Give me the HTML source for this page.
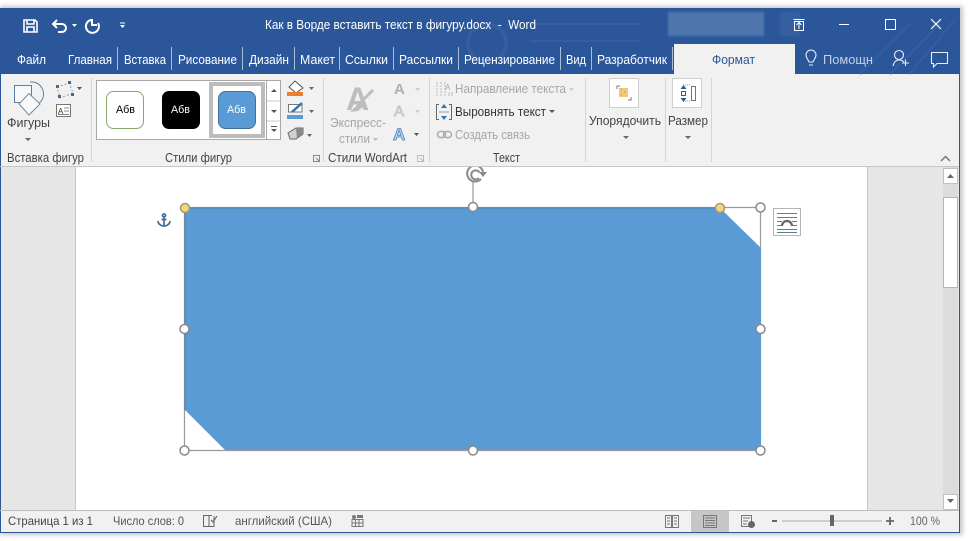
<!DOCTYPE html>
<html><head><meta charset="utf-8"><style>
html,body{margin:0;padding:0;background:#fff;width:968px;height:541px;overflow:hidden}
svg{display:block;position:absolute;left:0;top:0}
text{font-family:"Liberation Sans",sans-serif;font-size:13px;fill:#444}
.t{fill:#fff}
.g{fill:#a6a6a6}
</style></head><body>
<svg width="968" height="541" viewBox="0 0 968 541" xmlns="http://www.w3.org/2000/svg">
<defs>
<filter id="s" x="-2%" y="-2%" width="104%" height="104%"><feGaussianBlur stdDeviation="2"/></filter>
<filter id="b" x="-10%" y="-10%" width="120%" height="120%"><feGaussianBlur stdDeviation="1"/></filter>
<clipPath id="c"><rect x="440" y="167" width="70" height="40"/></clipPath>
</defs>
<rect x="0" y="6" width="963" height="529" fill="#888" opacity=".45" filter="url(#s)"/>
<rect x="0" y="8" width="960" height="525" fill="#2b579a"/>
<rect x="1" y="74" width="958" height="92" fill="#f1f1f1"/>
<rect x="1" y="166" width="958" height="344" fill="#e6e6e6"/>
<rect x="1" y="510" width="958" height="22" fill="#f1f1f1"/>
<rect x="0" y="166" width="959" height="1" fill="#c6c6c6"/>
<rect x="0" y="510" width="959" height="1" fill="#bdbdbd"/>

<!-- title bar decoration -->
<g fill="none" stroke="#335f9f" stroke-width="2">
<circle cx="487" cy="43" r="19" stroke-width="4"/>
<path d="M530 24H640M530 41H640M860 74l50-50M890 74l50-50M910 74l45-55"/>
</g>
<rect x="668" y="12" width="96" height="24" fill="#4f76ad" filter="url(#b)"/>
<rect x="780" y="12" width="20" height="24" fill="#34609f" filter="url(#b)"/>

<!-- QAT -->
<g stroke="#fff" fill="none" stroke-width="1.600">
<path d="M24 20H35L37 22V32H24Z"/><path d="M27 20V24H34V20M27 32V27H34V32"/>
<path d="M54 24H62A4 4 0 0 1 62 32H58" stroke-width="2"/><path d="M57 20L53 24L57 28" stroke-width="2"/>
<path d="M91 20A6.500 6.500 0 1 0 98 23" stroke-width="2"/><path d="M92 19V25H97" stroke-width="2"/>
<path d="M120 23H125" stroke-width="1"/>
</g>
<path d="M72 24h5l-2.500 3zM120 25h5l-2.500 3z" fill="#fff"/>
<text class="t" x="265" y="29" textLength="271" lengthAdjust="spacingAndGlyphs" xml:space="preserve">Как в Ворде вставить текст в фигуру.docx  -  Word</text>

<!-- window controls -->
<g fill="none" stroke="#fff" stroke-width="1">
<path d="M793.500 19.500H804.500M794.500 21.500H803.500V30.500H794.500ZM799 29V23M796.500 25L799 22.500L801.500 25"/>
<path d="M839 24.500H849"/>
<rect x="885.500" y="19.500" width="10" height="10"/>
<path d="M931 19L941 29M941 19L931 29" stroke-width="1.200"/>
</g>

<!-- tabs -->
<rect x="674" y="44" width="121" height="30" fill="#f1f1f1"/>
<g fill="#a9bcd8">
<rect x="117" y="47" width="1" height="23"/><rect x="171" y="47" width="1" height="23"/><rect x="242" y="47" width="1" height="23"/><rect x="294" y="47" width="1" height="23"/><rect x="339" y="47" width="1" height="23"/><rect x="393" y="47" width="1" height="23"/><rect x="458" y="47" width="1" height="23"/><rect x="560" y="47" width="1" height="23"/><rect x="591" y="47" width="1" height="23"/><rect x="672" y="47" width="1" height="23"/>
</g>
<text class="t" x="17" y="64" textLength="29" lengthAdjust="spacingAndGlyphs">Файл</text>
<text class="t" x="68" y="64" textLength="44" lengthAdjust="spacingAndGlyphs">Главная</text>
<text class="t" x="124" y="64" textLength="42" lengthAdjust="spacingAndGlyphs">Вставка</text>
<text class="t" x="178" y="64" textLength="59" lengthAdjust="spacingAndGlyphs">Рисование</text>
<text class="t" x="249" y="64" textLength="40" lengthAdjust="spacingAndGlyphs">Дизайн</text>
<text class="t" x="300" y="64" textLength="35" lengthAdjust="spacingAndGlyphs">Макет</text>
<text class="t" x="345" y="64" textLength="43" lengthAdjust="spacingAndGlyphs">Ссылки</text>
<text class="t" x="399" y="64" textLength="54" lengthAdjust="spacingAndGlyphs">Рассылки</text>
<text class="t" x="464" y="64" textLength="91" lengthAdjust="spacingAndGlyphs">Рецензирование</text>
<text class="t" x="566" y="64" textLength="20" lengthAdjust="spacingAndGlyphs">Вид</text>
<text class="t" x="597" y="64" textLength="70" lengthAdjust="spacingAndGlyphs">Разработчик</text>
<text x="712" y="64" textLength="43" lengthAdjust="spacingAndGlyphs" style="fill:#2b579a">Формат</text>
<text x="823" y="64" textLength="50" lengthAdjust="spacingAndGlyphs" style="fill:#c3d0e4">Помощн</text>
<g fill="none" stroke="#e6ecf5" stroke-width="1.100">
<path d="M809 62C808 59 806 58 806 55A5 5 0 0 1 816 55C816 58 814 59 813 62ZM809 65H813"/>
<circle cx="899" cy="55" r="4.500"/><path d="M893 66C894 62 896 60 899 60C901 60 903 61 904 62M902 63H909M905.500 59.500V66"/>
<path d="M931.500 52.500H947.500V63.500H937L933.500 67V63.500H931.500Z"/>
</g>

<!-- ribbon separators -->
<g fill="#d4d4d4">
<rect x="91" y="78" width="1" height="84"/><rect x="323" y="78" width="1" height="84"/><rect x="429" y="78" width="1" height="84"/><rect x="585" y="78" width="1" height="84"/><rect x="665" y="78" width="1" height="84"/><rect x="711" y="78" width="1" height="84"/>
</g>

<!-- Вставка фигур -->
<g fill="none" stroke="#5f7f9f" stroke-width="1">
<path d="M30 82A12 12 0 0 1 38 104"/>
<rect x="14.500" y="85.500" width="17" height="17" fill="#f6f8fa"/>
<path d="M29 93.500L40 104L29 115L19 104Z" fill="#f6f8fa" stroke="#7a8a99"/>
</g>
<path d="M57 87L69 83L73 93L60 98Z" fill="none" stroke="#8aa0b5" stroke-dasharray="2 2"/>
<g fill="#4a6a8a"><rect x="56" y="85" width="3" height="3"/><rect x="68" y="81" width="3" height="3"/><rect x="71" y="93" width="3" height="3"/><rect x="58" y="95" width="3" height="3"/></g>
<path d="M77 87h5l-2.500 3z" fill="#555"/>
<rect x="56.500" y="104.500" width="14" height="12" fill="#fff" stroke="#777"/>
<text x="58" y="114" style="font-size:8px;fill:#333">A</text><path d="M64 108H69M64 111H69M58 114.500H69" stroke="#888" fill="none"/>
<text x="7" y="127" textLength="43" lengthAdjust="spacingAndGlyphs">Фигуры</text>
<path d="M25 138h6l-3 3z" fill="#666"/>
<text x="7" y="162" textLength="77" lengthAdjust="spacingAndGlyphs">Вставка фигур</text>

<!-- gallery -->
<rect x="96.500" y="80.500" width="170" height="59" fill="#fff" stroke="#a8a8a8"/>
<rect x="209" y="82" width="56" height="56" fill="#bcbcbc"/><rect x="213" y="86" width="48" height="48" fill="#fff"/>
<rect x="106.500" y="91.500" width="37" height="37" rx="7" fill="#fff" stroke="#8aa56b"/>
<rect x="162" y="91" width="38" height="38" rx="7" fill="#000"/>
<rect x="218.500" y="91.500" width="37" height="37" rx="7" fill="#5b9bd5" stroke="#41719c"/>
<text x="116" y="113" textLength="19" lengthAdjust="spacingAndGlyphs" style="font-size:11px;fill:#000">Абв</text>
<text x="171" y="113" textLength="19" lengthAdjust="spacingAndGlyphs" style="font-size:11px;fill:#fff">Абв</text>
<text x="227" y="113" textLength="19" lengthAdjust="spacingAndGlyphs" style="font-size:11px;fill:#fff">Абв</text>
<rect x="266.500" y="80.500" width="14" height="59" fill="#fff" stroke="#a8a8a8"/>
<path d="M267 101H280M267 121H280" stroke="#c8c8c8"/>
<path d="M271 92l3-3 3 3zM271 110h6l-3 3zM271 129h6l-3 3z" fill="#555"/><path d="M271 126.500h6" stroke="#555"/>

<!-- colour tools -->
<path d="M295 81L303 88L296 93L289 87Z" fill="#fff" stroke="#555"/>
<rect x="287" y="92" width="16" height="4" fill="#ed7d31"/>
<path d="M288.500 104.500H302V112H288.500Z" fill="#fff" stroke="#777"/><path d="M292 112L302 103" stroke="#2e75b6" stroke-width="2.500"/>
<rect x="287" y="115" width="16" height="4" fill="#5b9bd5"/>
<path d="M288 133L296 128H303V134L296 139H290Z" fill="#d0d0d0" stroke="#666"/><path d="M296 128L303 128V134L297 138Z" fill="#888"/>
<path d="M309 87h5l-2.500 3zM309 110h5l-2.500 3zM307 134h5l-2.500 3z" fill="#666"/>
<text x="165" y="162" textLength="67" lengthAdjust="spacingAndGlyphs">Стили фигур</text>
<path d="M313.500 155.500h6v6h-6zM316 158l3 3" fill="none" stroke="#888"/>

<!-- WordArt -->
<text x="346" y="110" style="font-size:32px;font-weight:bold;fill:#bdbdbd">A</text>
<path d="M373 90L362 101" stroke="#bdbdbd" stroke-width="3" fill="none"/>
<path d="M350 112L360 102L364 106L358 111Z" fill="#bdbdbd"/>
<text class="g" x="330" y="127" textLength="56" lengthAdjust="spacingAndGlyphs">Экспресс-</text>
<text class="g" x="339" y="143" textLength="31" lengthAdjust="spacingAndGlyphs">стили</text>
<path d="M373 138h5l-2.500 3z" fill="#bbb"/>
<text x="394" y="94" style="font-size:15px;font-weight:bold;fill:#b0b0b0">A</text>
<path d="M415 88h5l-2.500 3z" fill="#ccc"/>
<text x="394" y="116" style="font-size:15px;fill:none;stroke:#b5b5b5;stroke-width:.7">A</text>
<path d="M415 110h5l-2.500 3z" fill="#ccc"/>
<text x="393" y="140" style="font-size:17px;font-weight:bold;fill:#bcd4ee;stroke:#4a80bd;stroke-width:.8">A</text>
<path d="M414 133h5l-2.500 3z" fill="#555"/>
<text x="328" y="162" textLength="79" lengthAdjust="spacingAndGlyphs">Стили WordArt</text>
<path d="M417.500 155.500h6v6h-6zM420 158l3 3" fill="none" stroke="#bbb"/>

<!-- Текст -->
<path d="M437 82V96M441 82V96M445 82V96" stroke="#bbb" fill="none" stroke-dasharray="2 1"/>
<text x="445" y="90" style="font-size:8px;fill:#aaa">A</text><path d="M449 92V96M452 92V96" stroke="#bbb"/>
<text class="g" x="455" y="93" textLength="111" lengthAdjust="spacingAndGlyphs">Направление текста</text>
<path d="M569 88h5l-2.500 3z" fill="#ccc"/>
<path d="M439 104.500H436.500V119.500H439M449 104.500H451.500V119.500H449" fill="none" stroke="#666"/>
<path d="M439 112H449" stroke="#999"/><path d="M444 104l3 4h-6zM444 120l3-4h-6z" fill="#2e75b6"/>
<text x="455" y="116" textLength="91" lengthAdjust="spacingAndGlyphs" style="fill:#333">Выровнять текст</text>
<path d="M549 110h6l-3 3z" fill="#555"/>
<rect x="437.500" y="131.500" width="8" height="6" rx="3" fill="none" stroke="#aaa" stroke-width="1.500"/><rect x="443.500" y="131.500" width="8" height="6" rx="3" fill="none" stroke="#aaa" stroke-width="1.500"/>
<text class="g" x="455" y="139" textLength="75" lengthAdjust="spacingAndGlyphs">Создать связь</text>
<text x="493" y="162" textLength="27" lengthAdjust="spacingAndGlyphs">Текст</text>

<!-- Упорядочить / Размер -->
<rect x="609.500" y="78.500" width="29" height="29" fill="#fff" stroke="#cfcfcf"/>
<rect x="619" y="88" width="9" height="9" fill="#f2c879"/>
<path d="M621 89h1M624 92h1M621 95h1" stroke="#b08a30"/>
<path d="M617 89V86H620M631 97V100H628" fill="none" stroke="#777"/>
<text x="589" y="125" textLength="72" lengthAdjust="spacingAndGlyphs">Упорядочить</text>
<path d="M623 136h6l-3 3z" fill="#666"/>
<rect x="672.500" y="78.500" width="29" height="29" fill="#fff" stroke="#cfcfcf"/>
<rect x="691.500" y="86.500" width="4" height="14" fill="#fff" stroke="#777"/>
<path d="M683 85h7M683 101h7" stroke="#999" stroke-dasharray="1 1"/>
<path d="M683.500 85l-3 4h6zM683.500 102l-3-4h6z" fill="#2f5f80"/>
<rect x="681.500" y="91.500" width="4" height="4" fill="none" stroke="#2f5f80"/>
<text x="668" y="125" textLength="40" lengthAdjust="spacingAndGlyphs">Размер</text>
<path d="M685 136h6l-3 3z" fill="#666"/>
<path d="M941 161L945.500 156.500L950 161" fill="none" stroke="#777" stroke-width="1.500"/>

<!-- document -->
<rect x="76" y="167" width="791" height="343" fill="#fff"/>
<rect x="75" y="167" width="1" height="343" fill="#c6c6c6"/>
<rect x="867" y="167" width="1" height="343" fill="#c6c6c6"/>

<!-- scrollbar -->
<rect x="943" y="167" width="15" height="343" fill="#dcdcdc"/>
<rect x="943.500" y="168.500" width="14" height="15" fill="#fff" stroke="#c0c0c0"/>
<path d="M947 178l3.500-4 3.500 4z" fill="#666"/>
<rect x="943.500" y="197.500" width="14" height="90" fill="#fff" stroke="#b5b5b5"/>
<rect x="943.500" y="494.500" width="14" height="15" fill="#fff" stroke="#c0c0c0"/>
<path d="M947 499h7l-3.500 4z" fill="#666"/>

<!-- shape -->
<path d="M184.500 207.500H760.500V450.500H184.500Z" fill="none" stroke="#9a9a9a" stroke-width="1.200"/>
<path d="M473 182V207" stroke="#9a9a9a" stroke-width="1.200"/>
<path d="M185 208H720L761 248V450H225L185 410Z" fill="#5b9bd5"/>
<path d="M185 410V208H720" fill="none" stroke="#4f7fa8" stroke-width="1"/>
<g fill="#fff" stroke="#8a8a8a" stroke-width="1.500">
<circle cx="473" cy="207" r="4.500"/><circle cx="760.500" cy="207.500" r="4.500"/>
<circle cx="184.500" cy="329" r="4.500"/><circle cx="760.500" cy="329" r="4.500"/>
<circle cx="184.500" cy="450.500" r="4.500"/><circle cx="473" cy="450.500" r="4.500"/><circle cx="760.500" cy="450.500" r="4.500"/>
</g>
<g fill="#f5d67e" stroke="#a09a78" stroke-width="1.500"><circle cx="185" cy="208" r="4.500"/><circle cx="720" cy="208" r="4.500"/></g>
<g fill="none" stroke="#8a8a8a" stroke-width="2" clip-path="url(#c)">
<path d="M481 179A8 8 0 1 1 483 172"/><path d="M479 178A4.500 4.500 0 1 1 479.500 172.500"/>
<path d="M479 172H487L483 177Z" fill="#8a8a8a" stroke="none"/>
</g>

<!-- anchor -->
<g fill="none" stroke="#3f6f9f" stroke-width="1.700">
<circle cx="164" cy="215.500" r="1.500"/><path d="M164 217V226M158 221C158 224 161 226 164 226C167 226 170 224 170 221M161.500 219.500H166.500"/>
</g>

<!-- layout options -->
<rect x="773.500" y="208.500" width="27" height="27" fill="#fff" stroke="#b5b5b5"/>
<path d="M777 213.500H797M777 217.500H797M777 221.500H782M792 221.500H797M777 225.500H781M793 225.500H797M777 229.500H797M777 232.500H797" stroke="#5a7f8f" fill="none"/>
<path d="M782 226A5 5 0 0 1 792 226" stroke="#666" stroke-width="2.200" fill="none"/>

<!-- status -->
<text x="8" y="525" textLength="85" lengthAdjust="spacingAndGlyphs" style="font-size:12px">Страница 1 из 1</text>
<text x="113" y="525" textLength="71" lengthAdjust="spacingAndGlyphs" style="font-size:12px;fill:#555">Число слов: 0</text>
<g fill="none" stroke="#666"><path d="M203.500 515.500H209V526.500H203.500ZM209 515.500H212M214 516V526.500H209"/><path d="M211 520L213 522L217 516" stroke="#555"/></g>
<text x="235" y="525" textLength="97" lengthAdjust="spacingAndGlyphs" style="font-size:12px;fill:#555">английский (США)</text>
<g fill="#777"><circle cx="354" cy="517" r="2"/><rect x="357" y="515" width="6" height="3"/></g>
<path d="M352 519.500H363V526.500H352ZM352 523H363M355.500 519.500V526.500M359 519.500V526.500" fill="none" stroke="#777"/>
<rect x="691" y="511" width="38" height="21" fill="#c6c6c6"/>
<g fill="none" stroke="#777">
<path d="M665.500 515.500H671.500V527.500H665.500ZM672.500 515.500H678.500V527.500H672.500ZM667 518H670M667 521H670M667 524H670M674 518H677M674 521H677M674 524H677"/>
<path d="M703.500 515.500H716.500V527.500H703.500ZM705 518H715M705 520.500H715M705 523H715M705 525.500H715"/>
<path d="M741.500 515.500H751.500V526.500H741.500ZM743 518H750M743 521H748M743 524H747"/>
</g>
<circle cx="751.500" cy="524.500" r="3.500" fill="#666"/>
<path d="M772 521H777" stroke="#666" stroke-width="2"/>
<path d="M782 521H882" stroke="#aaa"/>
<rect x="830" y="515" width="4" height="11" fill="#666"/>
<path d="M886 521H894M890 517V525" stroke="#666" stroke-width="1.800"/>
<text x="910" y="525" textLength="30" lengthAdjust="spacingAndGlyphs" style="font-size:12px;fill:#666">100 %</text>
</svg>
</body></html>
